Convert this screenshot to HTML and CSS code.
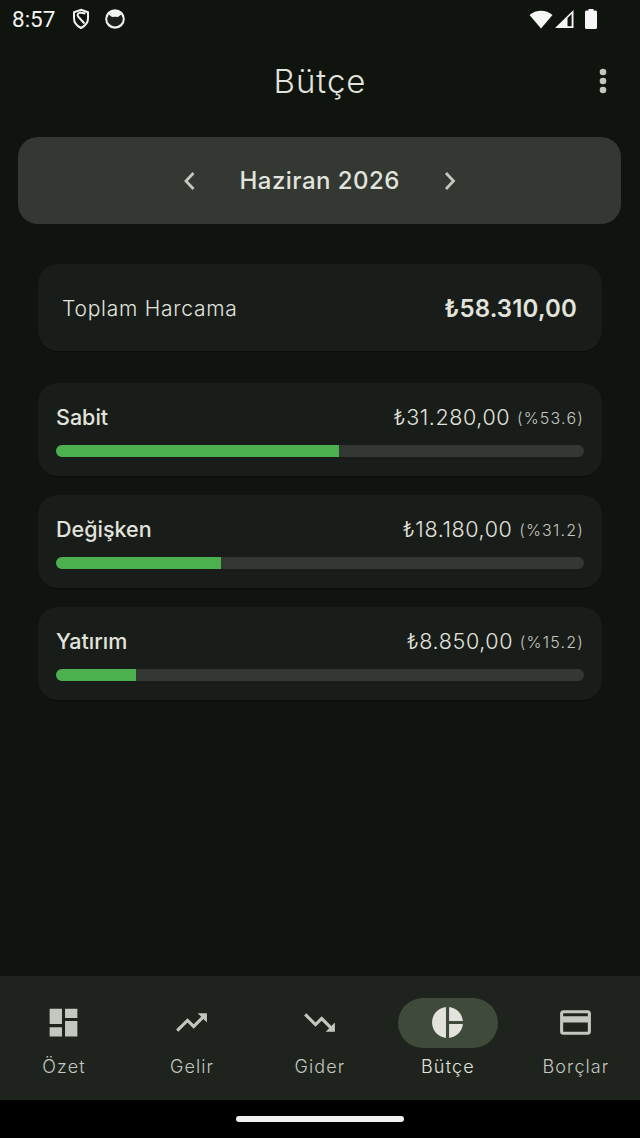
FILE: index.html
```html
<!DOCTYPE html>
<html lang="tr">

<head>
    <meta charset="UTF-8">
    <meta name="viewport" content="width=device-width, initial-scale=1.0">
    <title>Bütçe</title>
    <link rel="stylesheet" href="styles.css">
</head>

<body>
    <div class="screen">
        <div class="status-bar">
            <div class="status-left">
                <span class="clock">8:57</span>
                <svg class="shield" viewBox="0 0 20 22" width="20" height="22">
                    <path d="M10 1.800 L17 4.300 V10.500 C17 14.800 14 18 10 20 C6 18 3 14.800 3 10.500 V4.300 Z"/>
                    <path d="M14.500 5.500 L9 4.600 C6.500 5.200 5.800 7.200 7.500 9 L13.500 15.500"/>
                </svg>
                <svg viewBox="0 0 20 20" width="20" height="20">
                    <circle cx="10" cy="10" r="9.800" fill="#f2f2f2"/>
                    <path d="M2.100 9.500 L3.800 5.500 L7 8 Q10 7.400 13 8 L16.200 5.500 L17.900 9.500 A7.900 7.900 0 0 1 2.100 9.500 Z" fill="#1c201c"/>
                </svg>
            </div>
            <div class="status-right">
                <svg viewBox="0 0 24 20" width="24" height="20">
                    <path d="M0.500 6 C7 0.200 17 0.200 23.500 6 L12 19.500 Z" fill="#f6f6f6"/>
                </svg>
                <svg viewBox="0 0 20 20" width="20" height="20">
                    <path d="M19.500 1 V19 H1 Z M17.600 5 L13.500 9 V17.200 H17.600 Z" fill="#f6f6f6" fill-rule="evenodd"/>
                </svg>
                <svg class="battery" viewBox="0 0 14 20" width="14" height="20">
                    <path d="M4.500 0 H9.500 V1.500 H11.500 C12.300 1.500 13 2.200 13 3 V18.500 C13 19.300 12.300 20 11.500 20 H2.500 C1.700 20 1 19.300 1 18.500 V3 C1 2.200 1.700 1.500 2.500 1.500 H4.500 Z" fill="#f6f6f6"/>
                </svg>
            </div>
        </div>

        <header class="app-bar">
            <h1>Bütçe</h1>
            <svg class="more" viewBox="0 0 8 26" width="8" height="26">
                <circle cx="4" cy="4" r="3.300"/>
                <circle cx="4" cy="13" r="3.300"/>
                <circle cx="4" cy="22" r="3.300"/>
            </svg>
        </header>

        <div class="month-card">
            <svg viewBox="0 0 14 20" width="14" height="20">
                <path d="M10.500 2 L3 10 L10.500 18" class="chevron"/>
            </svg>
            <span class="month-name">Haziran 2026</span>
            <svg viewBox="0 0 14 20" width="14" height="20">
                <path d="M3 2 L10.500 10 L3 18" class="chevron"/>
            </svg>
        </div>

        <main class="content">
            <div class="card total-card">
                <span class="total-label">Toplam Harcama</span>
                <span class="total-value">₺58.310,00</span>
            </div>

            <div class="card category">
                <div class="category-row">
                    <span class="category-name">Sabit</span>
                    <span class="category-amount">₺31.280,00 <small>(%53.6)</small></span>
                </div>
                <div class="track"><div class="fill" style="width: 53.6%"></div></div>
            </div>

            <div class="card category">
                <div class="category-row">
                    <span class="category-name">Değişken</span>
                    <span class="category-amount">₺18.180,00 <small>(%31.2)</small></span>
                </div>
                <div class="track"><div class="fill" style="width: 31.2%"></div></div>
            </div>

            <div class="card category">
                <div class="category-row">
                    <span class="category-name">Yatırım</span>
                    <span class="category-amount">₺8.850,00 <small>(%15.2)</small></span>
                </div>
                <div class="track"><div class="fill" style="width: 15.2%"></div></div>
            </div>
        </main>

        <nav class="bottom-nav">
            <div class="nav-item">
                <div class="nav-icon">
                    <svg viewBox="0 0 24 24" width="37" height="37">
                        <path d="M3 13h8V3H3v10zm0 8h8v-6H3v6zm10 0h8V11h-8v10zm0-18v6h8V3h-8z" class="solid"/>
                    </svg>
                </div>
                <span>Özet</span>
            </div>
            <div class="nav-item">
                <div class="nav-icon">
                    <svg viewBox="0 0 24 24" width="37" height="37">
                        <path d="M16 6l2.290 2.290-4.880 4.880-4-4L2 16.590 3.410 18l6-6 4 4 6.300-6.290L22 12V6z" class="solid"/>
                    </svg>
                </div>
                <span>Gelir</span>
            </div>
            <div class="nav-item">
                <div class="nav-icon">
                    <svg viewBox="0 0 24 24" width="37" height="37">
                        <path d="M16 18l2.290-2.290-4.880-4.880-4 4L2 7.410 3.410 6l6 6 4-4 6.300 6.290L22 12v6z" class="solid"/>
                    </svg>
                </div>
                <span>Gider</span>
            </div>
            <div class="nav-item active">
                <div class="nav-icon">
                    <svg viewBox="0 0 24 24" width="37" height="37">
                        <path d="M11 2v20c-5.070-.5-9-4.790-9-10s3.930-9.500 9-10zm2.030 0v8.990H22c-.47-4.740-4.240-8.520-8.970-8.990zm0 11.010V22c4.740-.47 8.500-4.250 8.970-8.990h-8.970z" class="solid"/>
                    </svg>
                </div>
                <span>Bütçe</span>
            </div>
            <div class="nav-item">
                <div class="nav-icon">
                    <svg viewBox="0 0 24 24" width="37" height="37">
                        <path d="M20 4H4c-1.110 0-1.990.89-1.990 2L2 18c0 1.110.89 2 2 2h16c1.110 0 2-.89 2-2V6c0-1.110-.89-2-2-2zm0 14H4v-6h16v6zm0-10H4V6h16v2z" class="solid"/>
                    </svg>
                </div>
                <span>Borçlar</span>
            </div>
        </nav>

        <div class="home-area"><div class="home-pill"></div></div>
    </div>
</body>

</html>
```

FILE: styles.css
```css
* {
    box-sizing: border-box;
}

body {
    font-family: Inter, "Noto Sans", sans-serif;
    background-color: #0f140f;
    margin: 0;
    padding: 0;
}

.screen {
    width: 640px;
    height: 1138px;
    display: flex;
    flex-direction: column;
    overflow: hidden;
}

.status-bar {
    height: 38px;
    padding: 0 12px;
    display: flex;
    justify-content: space-between;
    align-items: center;
}

.status-left {
    display: flex;
    align-items: center;
    gap: 14px;
    color: #f2f2f2;
}

.clock {
    font-family: Roboto, sans-serif;
    font-size: 22.500px;
    margin-right: 2px;
}

.shield {
    fill: none;
    stroke: #f2f2f2;
    stroke-width: 2;
}

.status-right {
    display: flex;
    align-items: center;
    gap: 1px;
    padding-right: 30px;
}

.battery {
    margin-left: 9px;
}

.app-bar {
    height: 86px;
    display: flex;
    align-items: center;
    justify-content: center;
    position: relative;
}

.app-bar h1 {
    margin: 0;
    font-size: 33px;
    font-weight: 300;
    letter-spacing: 1px;
    color: #e2e3dd;
}

.more {
    position: absolute;
    right: 33px;
    top: 30px;
    fill: #c4c7c0;
}

.month-card {
    margin: 13px 19px 0 18px;
    height: 87px;
    background: #333833;
    border-radius: 20px;
    display: flex;
    align-items: center;
    justify-content: center;
    gap: 43px;
}

.month-name {
    font-size: 24px;
    font-weight: 500;
    letter-spacing: 0.45px;
    color: #e2e3dd;
    width: 160px;
    text-align: center;
    white-space: nowrap;
}

.chevron {
    fill: none;
    stroke: #c4c7c0;
    stroke-width: 2.800;
}

.content {
    flex: 1;
    padding: 40px 38px 0;
    display: flex;
    flex-direction: column;
    gap: 19px;
}

.card {
    background: #191d19;
    border-radius: 20px;
    box-shadow: 0 1px 1px rgba(0, 0, 0, 0.25);
}

.total-card {
    height: 87px;
    padding: 1px 25px 0 24px;
    margin-bottom: 13px;
    display: flex;
    align-items: center;
    justify-content: space-between;
}

.total-label {
    font-size: 21px;
    font-weight: 350;
    color: #e2e3dd;
    letter-spacing: 0.75px;
}

.total-value {
    font-size: 24px;
    font-weight: 600;
    letter-spacing: 0.15px;
    color: #e2e3dd;
}

.category {
    height: 93px;
    padding: 21px 18px 0;
}

.category-row {
    display: flex;
    justify-content: space-between;
    align-items: center;
    height: 26px;
    margin-bottom: 15px;
}

.category-name {
    font-size: 21.500px;
    font-weight: 500;
    color: #e2e3dd;
}

.category-amount {
    font-size: 21.500px;
    font-weight: 350;
    color: #e2e3dd;
    letter-spacing: 0.6px;
}

.category-amount small {
    font-size: 16px;
    font-weight: 350;
    color: #c4c7c0;
    letter-spacing: 1.200px;
    vertical-align: 1.500px;
}

.track {
    height: 12px;
    background: #333833;
    border-radius: 6px;
    overflow: hidden;
}

.fill {
    height: 100%;
    background: #4caf50;
}

.bottom-nav {
    height: 124px;
    background: #1e231e;
    display: flex;
    padding-top: 22px;
}

.nav-item {
    flex: 1;
    display: flex;
    flex-direction: column;
    align-items: center;
    gap: 8px;
    font-size: 18px;
    font-weight: 300;
    letter-spacing: 1.100px;
    color: #c4c7c0;
}

.nav-icon {
    width: 100px;
    height: 50px;
    border-radius: 25px;
    padding: 0 1px 1px 0;
    display: flex;
    align-items: center;
    justify-content: center;
}

.nav-item.active .nav-icon {
    background: #3f4a3a;
}

.nav-item.active {
    color: #e2e3dd;
    font-weight: 350;
    letter-spacing: 1.200px;
}

.solid {
    fill: #c4c7c0;
}

.nav-item.active .solid {
    fill: #e2e3dd;
}

.home-area {
    height: 38px;
    background: #000;
    display: flex;
    justify-content: center;
    padding-top: 16px;
}

.home-pill {
    width: 168px;
    height: 6px;
    background: #f2f2f2;
    border-radius: 3px;
}
```
